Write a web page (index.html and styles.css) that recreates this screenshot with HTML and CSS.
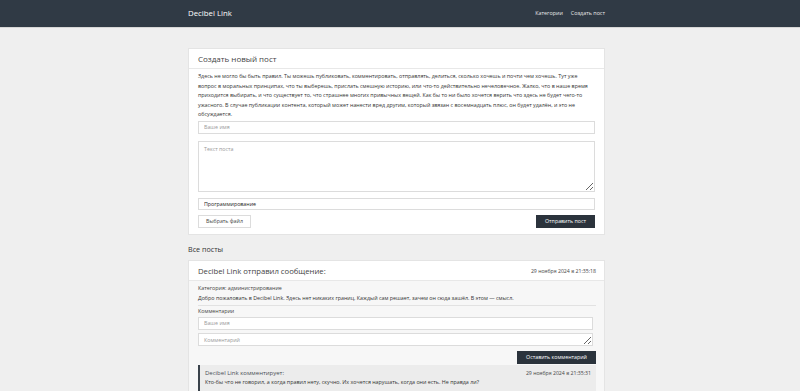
FILE: index.html
```html
<!DOCTYPE html>
<html lang="ru">
<head>
    <meta charset="utf-8">
    <title>Decibel Link</title>
    <link rel="stylesheet" href="styles.css">
</head>
<body>
    <header class="navbar">
        <div class="container navbar-inner">
            <a class="brand" href="#">Decibel Link</a>
            <nav class="nav">
                <a href="#">Категории</a>
                <a href="#">Создать пост</a>
            </nav>
        </div>
    </header>

    <main class="container">
        <section class="card">
            <div class="card-header">
                <h2 class="card-title">Создать новый пост</h2>
            </div>
            <div class="card-body">
                <p class="rules">Здесь не могло бы быть правил. Ты можешь публиковать, комментировать, отправлять, делиться, сколько хочешь и почти чем хочешь. Тут уже вопрос в моральных принципах, что ты выберешь, прислать смешную историю, или что-то действительно нечеловечное. Жалко, что в наше время приходится выбирать, и что существует то, что страшнее многих привычных вещей. Как бы то ни было хочется верить что здесь не будет чего-то ужасного. В случае публикации контента, который может нанести вред другим, который звязан с восемнадцать плюс, он будет удалён, и это не обсуждается.</p>
                <form class="post-form">
                    <input class="field" type="text" placeholder="Ваше имя">
                    <textarea class="field field-area" placeholder="Текст поста"></textarea>
                    <select class="field field-select">
                        <option>Программирование</option>
                    </select>
                    <div class="form-actions">
                        <button type="button" class="btn btn-light">Выбрать файл</button>
                        <button type="button" class="btn btn-dark">Отправить пост</button>
                    </div>
                </form>
            </div>
        </section>

        <h3 class="section-title">Все посты</h3>

        <article class="card post">
            <div class="card-header post-header">
                <h2 class="post-title">Decibel Link отправил сообщение:</h2>
                <span class="date">29 ноября 2024 в 21:35:18</span>
            </div>
            <div class="card-body post-body">
                <p class="category">Категория: администрирование</p>
                <p class="post-text">Добро пожаловать в Decibel Link. Здесь нет никаких границ. Каждый сам решает, зачем он сюда зашёл. В этом — смысл.</p>
                <hr class="divider">
                <p class="comments-label">Комментарии</p>
                <form class="comment-form">
                    <input class="field" type="text" placeholder="Ваше имя">
                    <textarea class="field field-small" placeholder="Комментарий"></textarea>
                    <div class="comment-actions">
                        <button type="button" class="btn btn-dark">Оставить комментарий</button>
                    </div>
                </form>
                <div class="comment">
                    <div class="comment-head">
                        <span class="comment-author">Decibel Link комментирует:</span>
                        <span class="date">29 ноября 2024 в 21:35:31</span>
                    </div>
                    <p class="comment-text">Кто-бы что не говорил, а когда правил нету, скучно. Их хочется нарушать, когда они есть. Не правда ли?</p>
                </div>
            </div>
        </article>
    </main>
</body>
</html>
```

FILE: styles.css
```css
:root {
    --dark: #303a45;
    --page: #efefef;
    --border: #dcdcdc;
    --text: #333;
    --muted: #999;
}

body {
    margin: 0;
    padding-right: 7px;
    background: var(--page);
    color: var(--text);
    font-family: 'Open Sans', 'Noto Sans', sans-serif;
    font-size: 5.35px;
    line-height: 9.5px;
}

p {
    margin: 0;
}

.container {
    width: 417px;
    margin: 0 auto;
}

/* шапка */
.navbar {
    background: var(--dark);
    height: 27px;
    margin-right: -7px;
    padding-right: 7px;
    border-bottom: 1px solid #d6d6d6;
}

.navbar-inner {
    display: flex;
    align-items: center;
    justify-content: space-between;
    height: 100%;
}

.brand {
    color: #fff;
    font-size: 7.8px;
    text-decoration: none;
}

.nav {
    display: flex;
    gap: 8px;
}

.nav a {
    color: #e8e8e8;
    text-decoration: none;
    font-size: 5.4px;
}

main.container {
    padding: 20px 0 60px;
}

/* карточки */
.card {
    background: #fff;
    border: 1px solid #e4e4e4;
}

.card-header {
    padding: 5px 9px;
    border-bottom: 1px solid #e8e8e8;
}

.card-title {
    margin: 0;
    font-size: 8px;
    line-height: 9px;
    font-weight: 400;
    color: #444;
}

.card-body {
    padding: 3px 9px 6px;
}

.post-form {
    display: flex;
    flex-direction: column;
    gap: 7px;
    margin-top: 1px;
}

.field {
    box-sizing: border-box;
    width: 100%;
    height: 13px;
    margin: 0;
    padding: 0 5px;
    border: 1px solid var(--border);
    background: #fff;
    font-family: inherit;
    font-size: 5.3px;
    color: var(--text);
    outline: none;
}

.field::placeholder {
    color: var(--muted);
}

.field-area {
    height: 51px;
    padding-top: 3px;
}

.field-select {
    appearance: none;
    -webkit-appearance: none;
    height: 12px;
    color: #222;
    margin-top: -1px;
}

.form-actions {
    display: flex;
    justify-content: space-between;
    margin-top: -2px;
}

.btn {
    height: 13px;
    padding: 0 8px;
    font-family: inherit;
    font-size: 5.3px;
    border: 1px solid var(--border);
    cursor: pointer;
}

.btn-light {
    background: #fff;
    color: #444;
    padding: 0 7px;
}

.btn-dark {
    background: #2b333c;
    border-color: #2b333c;
    color: #fff;
}

.section-title {
    margin: 10px 0 6px;
    font-size: 7.2px;
    line-height: 9px;
    font-weight: 400;
    color: #333;
}

/* посты */
.post-header {
    display: flex;
    justify-content: space-between;
    align-items: center;
    padding: 6px 8px 4px 9px;
    background: #fff;
}

.post-title {
    margin: 0;
    font-size: 7.7px;
    line-height: 9px;
    font-weight: 400;
    color: #444;
}

.date {
    font-size: 5.2px;
    color: #444;
}

.post-body {
    background: #f7f7f7;
    padding: 3px 8px 0 9px;
}

.category,
.comments-label {
    color: #444;
}

.divider {
    border: none;
    border-top: 1px solid #e2e2e2;
    margin: 2px 0 1px;
}

.comment-form {
    display: flex;
    flex-direction: column;
    gap: 3px;
    padding-right: 3px;
}

.field-small {
    height: 13px;
    padding-top: 2px;
    resize: vertical;
}

.comment-actions {
    display: flex;
    justify-content: flex-end;
    margin: 2px -3px 1px 0;
}

.comment {
    background: #ececec;
    border-left: 2px solid #3a424b;
    padding: 4px 5px 6px;
}

.comment-head {
    display: flex;
    justify-content: space-between;
    align-items: center;
}

.comment-author {
    font-size: 6px;
    color: #4a4f56;
}
```
